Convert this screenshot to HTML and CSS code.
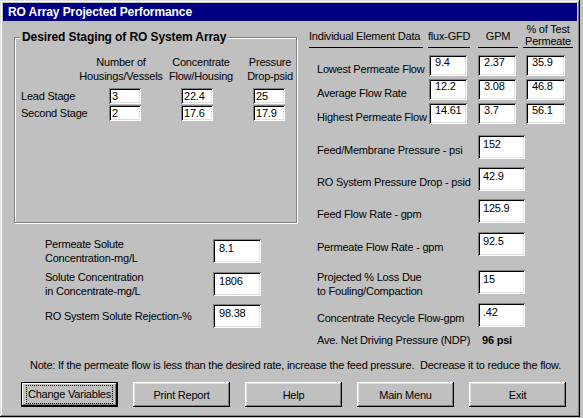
FILE: index.html
```html
<!DOCTYPE html>
<html>
<head>
<meta charset="utf-8">
<title>RO Array Projected Performance</title>
<link rel="stylesheet" href="styles.css">
</head>
<body>
<div class="window">
  <div class="titlebar">RO Array Projected Performance</div>
  <div class="client">
    <div class="left">
      <div class="group">
        <span class="legend">Desired Staging of RO System Array</span>
        <div class="ghead">
          <div class="gh gh1">Number of<br>Housings/Vessels</div>
          <div class="gh gh2">Concentrate<br>Flow/Housing</div>
          <div class="gh gh3">Pressure<br>Drop-psid</div>
        </div>
        <div class="grow">
          <span class="glabel">Lead Stage</span>
          <span class="field gf">3</span>
          <span class="field gf gsp">22.4</span>
          <span class="field gf gsp">25</span>
        </div>
        <div class="grow grow2">
          <span class="glabel">Second Stage</span>
          <span class="field gf">2</span>
          <span class="field gf gsp">17.6</span>
          <span class="field gf gsp">17.9</span>
        </div>
      </div>
      <div class="lower">
        <div class="lrow">
          <span class="llabel">Permeate Solute<br>Concentration-mg/L</span>
          <span class="field lf">8.1</span>
        </div>
        <div class="lrow lrow2">
          <span class="llabel">Solute Concentration<br>in Concentrate-mg/L</span>
          <span class="field lf">1806</span>
        </div>
        <div class="lrow lrow3">
          <span class="llabel">RO System Solute Rejection-%</span>
          <span class="field lf">98.38</span>
        </div>
      </div>
    </div>
    <div class="right">
      <div class="thead">
        <div class="th th1">Individual Element Data</div>
        <div class="th th2">flux-GFD</div>
        <div class="th th3">GPM</div>
        <div class="th th4">% of Test<br>Permeate</div>
      </div>
      <div class="trow trow1">
        <span class="tlabel">Lowest Permeate Flow</span>
        <span class="field tf tf1">9.4</span>
        <span class="field tf tf2">2.37</span>
        <span class="field tf tf3">35.9</span>
      </div>
      <div class="trow">
        <span class="tlabel">Average Flow Rate</span>
        <span class="field tf tf1">12.2</span>
        <span class="field tf tf2">3.08</span>
        <span class="field tf tf3">46.8</span>
      </div>
      <div class="trow">
        <span class="tlabel">Highest Permeate Flow</span>
        <span class="field tf tf1">14.61</span>
        <span class="field tf tf2">3.7</span>
        <span class="field tf tf3">56.1</span>
      </div>
      <div class="rrow rr1">
        <span class="rlabel">Feed/Membrane Pressure - psi</span>
        <span class="field rf">152</span>
      </div>
      <div class="rrow rr2">
        <span class="rlabel">RO System Pressure Drop - psid</span>
        <span class="field rf">42.9</span>
      </div>
      <div class="rrow rr3">
        <span class="rlabel">Feed Flow Rate - gpm</span>
        <span class="field rf">125.9</span>
      </div>
      <div class="rrow rr4">
        <span class="rlabel">Permeate Flow Rate - gpm</span>
        <span class="field rf">92.5</span>
      </div>
      <div class="rrow rr5">
        <span class="rlabel rlabel2">Projected % Loss Due<br>to Fouling/Compaction</span>
        <span class="field rf">15</span>
      </div>
      <div class="rrow rr6">
        <span class="rlabel">Concentrate Recycle Flow-gpm</span>
        <span class="field rf">.42</span>
      </div>
      <div class="ndp">
        <span class="ndplabel">Ave. Net Driving Pressure (NDP)</span>
        <span class="ndpval">96 psi</span>
      </div>
    </div>
  </div>
  <div class="note">Note: If the permeate flow is less than the desired rate, increase the feed pressure.&nbsp; Decrease it to reduce the flow.</div>
  <div class="buttons">
    <button class="btn btn-default"><span class="focus">Change Variables</span></button>
    <button class="btn">Print Report</button>
    <button class="btn">Help</button>
    <button class="btn">Main Menu</button>
    <button class="btn">Exit</button>
  </div>
</div>
</body>
</html>
```

FILE: styles.css
```css
html, body {
  margin: 0;
  padding: 0;
  background: #c0c0c0;
}

body {
  font-family: "Liberation Sans", Arial, sans-serif;
  font-size: 11px;
  line-height: 13px;
  letter-spacing: -0.22px;
  color: #000;
}

.window {
  box-sizing: border-box;
  width: 580px;
  height: 417px;
  padding: 3px;
  background: #c0c0c0;
  box-shadow: inset -1px -1px #000, inset 1px 1px #dfdfdf, inset -2px -2px #808080, inset 2px 2px #fff;
}

.titlebar {
  height: 18px;
  line-height: 18px;
  padding-left: 5px;
  background: #000080;
  color: #fff;
  font-weight: bold;
  font-size: 12px;
  letter-spacing: -0.1px;
  white-space: nowrap;
}

.client {
  display: flex;
  align-items: flex-start;
}

/* ---------- left column ---------- */
.left {
  margin-left: 11px;
  width: 284px;
  flex: none;
}

.group {
  position: relative;
  box-sizing: border-box;
  width: 283px;
  height: 186px;
  margin-top: 16px;
  border: 1px solid #808080;
  box-shadow: inset 1px 1px #fff, 1px 1px #fff;
}

.legend {
  position: absolute;
  top: -8px;
  left: 5px;
  padding: 0 2px;
  background: #c0c0c0;
  font-weight: bold;
  font-size: 12px;
  line-height: 14px;
  letter-spacing: -0.1px;
  white-space: nowrap;
}

.ghead {
  display: flex;
  margin-top: 17px;
  padding-left: 62px;
}

.gh {
  text-align: center;
  line-height: 14px;
  white-space: nowrap;
  flex: none;
}

.gh1 { width: 88px; }
.gh2 { width: 70px; margin-left: 1px; }
.gh3 { width: 48px; margin-left: 10px; }

.grow {
  display: flex;
  align-items: center;
  margin-top: 5px;
  padding-left: 6px;
  height: 16px;
}

.grow2 { margin-top: 1px; }

.glabel {
  width: 88px;
  flex: none;
  white-space: nowrap;
}

.field {
  box-sizing: border-box;
  display: block;
  flex: none;
  background: #fff;
  box-shadow: inset 1px 1px #808080, inset -1px -1px #fff, inset 2px 2px #000, inset -2px -2px #dfdfdf;
  white-space: nowrap;
  overflow: hidden;
}

.gf {
  width: 32px;
  height: 16px;
  line-height: 16px;
  padding-left: 3px;
}

.gsp { margin-left: 40px; }

.lower {
  margin-top: 14px;
  padding-left: 31px;
}

.lrow {
  display: flex;
  align-items: center;
}

.lrow2 { margin-top: 5px; }
.lrow3 { margin-top: 6px; }

.llabel {
  width: 168px;
  flex: none;
  line-height: 14px;
  white-space: nowrap;
}

.lf {
  width: 48px;
  height: 24px;
  padding: 3px 0 0 6px;
}

/* ---------- right column ---------- */
.right {
  margin-left: 11px;
  flex: 1;
}

.thead {
  display: flex;
  align-items: flex-end;
  margin-top: 2px;
}

.th {
  flex: none;
  border-bottom: 1px solid #000;
  white-space: nowrap;
  padding-bottom: 4px;
}

.th1 { width: 114px; }
.th2 { width: 42px; margin-left: 5px; }
.th3 { width: 40px; margin-left: 8px; text-align: center; }
.th4 {
  width: 50px;
  margin-left: 5px;
  text-align: center;
  line-height: 12px;
  padding-bottom: 0;
}

.trow {
  display: flex;
  align-items: flex-start;
  margin-top: 3px;
}

.trow1 { margin-top: 7px; }

.tlabel {
  width: 112px;
  margin-left: 8px;
  padding-top: 8px;
  flex: none;
  white-space: nowrap;
}

.tf {
  width: 38px;
  height: 21px;
  padding: 1px 0 0 6px;
}

.tf2 { margin-left: 11px; }
.tf3 { margin-left: 10px; width: 39px; }

.rrow {
  display: flex;
  align-items: flex-start;
}

.rr1 { margin-top: 11px; }
.rr2 { margin-top: 8px; }
.rr3 { margin-top: 8px; }
.rr4 { margin-top: 9px; }
.rr5 { margin-top: 14px; }
.rr6 { margin-top: 5px; }

.rlabel {
  width: 161px;
  margin-left: 8px;
  padding-top: 9px;
  flex: none;
  white-space: nowrap;
}

.rlabel2 {
  padding-top: 0;
  line-height: 14px;
}

.rf {
  width: 47px;
  height: 24px;
  padding: 3px 0 0 5px;
}

.ndp {
  display: flex;
  margin-top: 7px;
}

.ndplabel {
  width: 165px;
  margin-left: 8px;
  flex: none;
  white-space: nowrap;
}

.ndpval {
  font-weight: bold;
  white-space: nowrap;
}

/* ---------- footer ---------- */
.note {
  margin-top: 12px;
  padding-left: 27px;
  white-space: nowrap;
}

.buttons {
  display: flex;
  gap: 15px;
  margin-top: 10px;
  padding-left: 18px;
}

.btn {
  box-sizing: border-box;
  width: 97px;
  height: 25px;
  margin: 0;
  padding: 0;
  border: none;
  background: #c0c0c0;
  font-family: "Liberation Sans", Arial, sans-serif;
  font-size: 11px;
  letter-spacing: -0.22px;
  color: #000;
  box-shadow: inset -1px -1px #000, inset 1px 1px #fff, inset -2px -2px #808080, inset 2px 2px #dfdfdf;
}

.btn-default {
  box-shadow: inset 0 0 0 1px #000, inset -2px -2px #000, inset 2px 2px #fff, inset -3px -3px #808080;
}

.focus {
  display: inline-block;
  padding: 2px 1px;
  border: 1px dotted #000;
  line-height: 13px;
}
```
